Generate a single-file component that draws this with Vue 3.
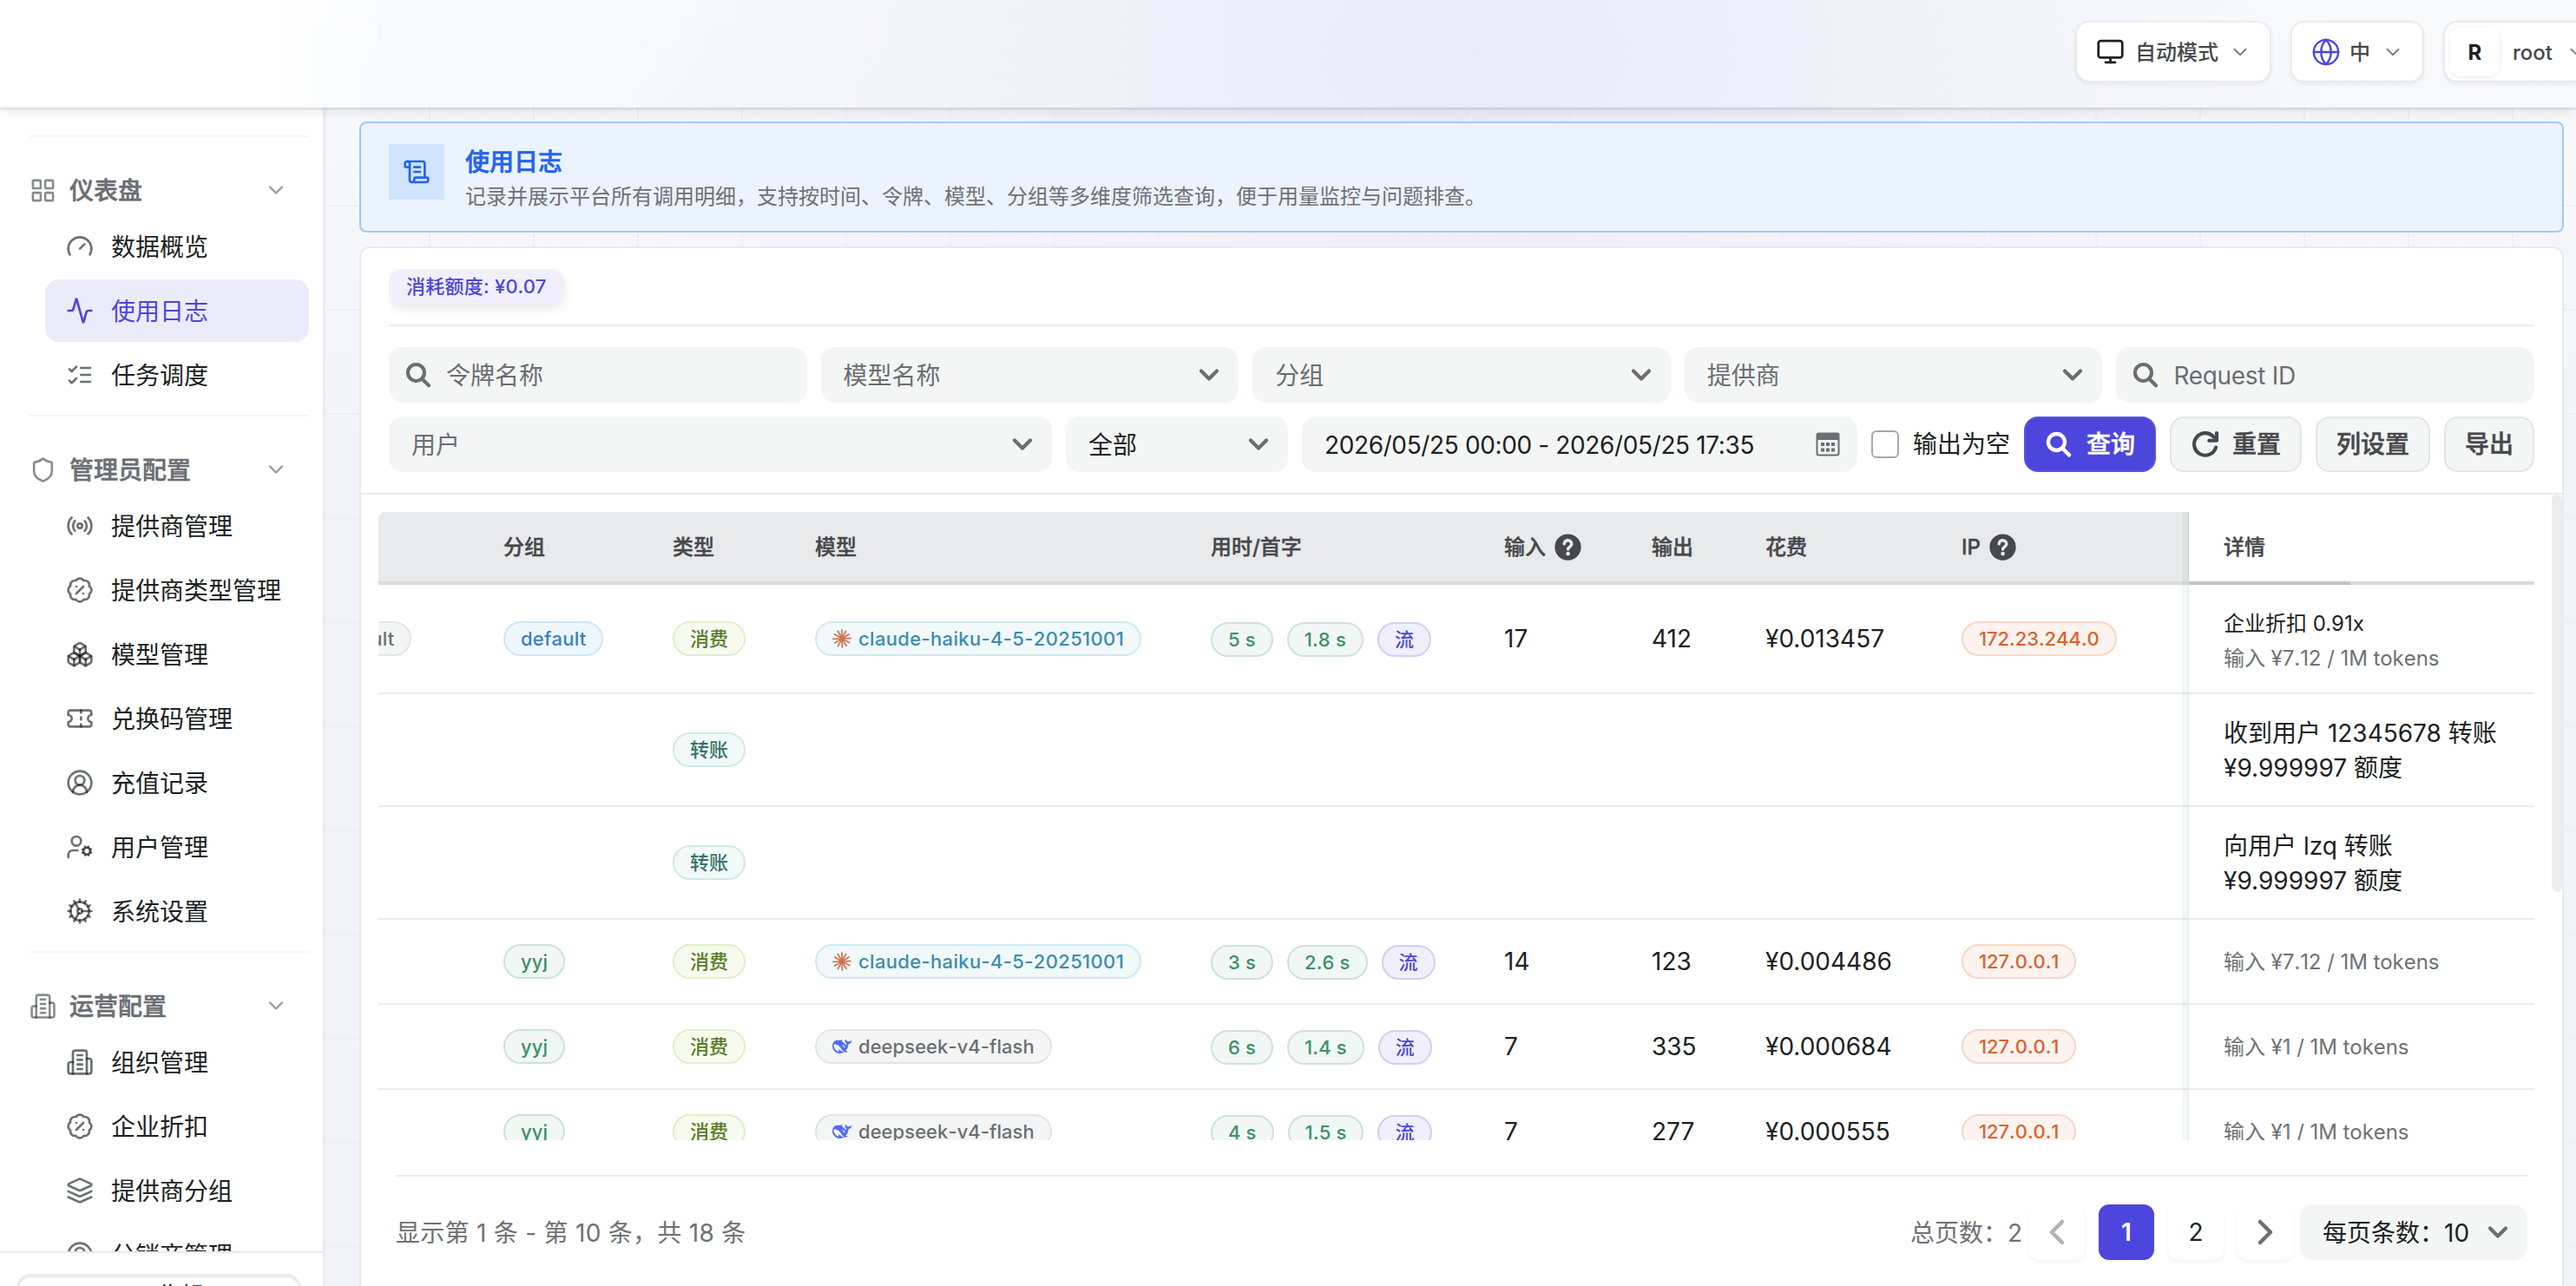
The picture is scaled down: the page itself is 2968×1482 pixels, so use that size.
<script setup>
import { h } from 'vue'

const I = {
  grid: ['M4 3h5a1 1 0 0 1 1 1v5a1 1 0 0 1-1 1H4a1 1 0 0 1-1-1V4a1 1 0 0 1 1-1Z', 'M15 3h5a1 1 0 0 1 1 1v5a1 1 0 0 1-1 1h-5a1 1 0 0 1-1-1V4a1 1 0 0 1 1-1Z', 'M15 14h5a1 1 0 0 1 1 1v5a1 1 0 0 1-1 1h-5a1 1 0 0 1-1-1v-5a1 1 0 0 1 1-1Z', 'M4 14h5a1 1 0 0 1 1 1v5a1 1 0 0 1-1 1H4a1 1 0 0 1-1-1v-5a1 1 0 0 1 1-1Z'],
  gauge: ['m12 14 4-4', 'M3.34 19a10 10 0 1 1 17.32 0'],
  activity: ['M22 12h-2.48a2 2 0 0 0-1.93 1.46l-2.35 8.36a.25.25 0 0 1-.48 0L9.24 2.18a.25.25 0 0 0-.48 0l-2.35 8.36A2 2 0 0 1 4.49 12H2'],
  checks: ['m3 17 2 2 4-4', 'm3 7 2 2 4-4', 'M13 6h8', 'M13 12h8', 'M13 18h8'],
  shield: ['M20 13c0 5-3.5 7.5-7.66 8.95a1 1 0 0 1-.67-.01C7.5 20.5 4 18 4 13V6a1 1 0 0 1 1-1c2 0 4.5-1.2 6.24-2.72a1.17 1.17 0 0 1 1.52 0C14.51 3.81 17 5 19 5a1 1 0 0 1 1 1z'],
  radio: ['M4.9 19.1C1 15.2 1 8.8 4.9 4.9', 'M7.8 16.2c-2.3-2.3-2.3-6.1 0-8.5', 'M10 12a2 2 0 1 0 4 0a2 2 0 1 0-4 0', 'M16.2 7.8c2.3 2.3 2.3 6.1 0 8.5', 'M19.1 4.9C23 8.8 23 15.1 19.1 19'],
  percent: ['M3.85 8.62a4 4 0 0 1 4.78-4.77 4 4 0 0 1 6.74 0 4 4 0 0 1 4.78 4.78 4 4 0 0 1 0 6.74 4 4 0 0 1-4.77 4.78 4 4 0 0 1-6.75 0 4 4 0 0 1-4.78-4.77 4 4 0 0 1 0-6.76Z', 'm15 9-6 6', 'M9 9h.01', 'M15 15h.01'],
  boxes: ['M2.97 12.92A2 2 0 0 0 2 14.63v3.24a2 2 0 0 0 .97 1.71l3 1.8a2 2 0 0 0 2.06 0L12 19v-5.5l-5-3-4.03 2.42Z', 'm7 16.5-4.74-2.85', 'm7 16.5 5-3', 'M7 16.5v5.17', 'M12 13.5V19l3.97 2.38a2 2 0 0 0 2.06 0l3-1.8a2 2 0 0 0 .97-1.71v-3.24a2 2 0 0 0-.97-1.71L17 10.5l-5 3Z', 'm17 16.5-5-3', 'm17 16.5 4.74-2.85', 'M17 16.5v5.17', 'M7.97 4.42A2 2 0 0 0 7 6.13v4.37l5 3 5-3V6.13a2 2 0 0 0-.97-1.71l-3-1.8a2 2 0 0 0-2.06 0l-3 1.8Z', 'M12 8 7.26 5.15', 'm12 8 4.74-2.85', 'M12 13.5V8'],
  ticket: ['M2 9a3 3 0 0 1 0 6v2a2 2 0 0 0 2 2h16a2 2 0 0 0 2-2v-2a3 3 0 0 1 0-6V7a2 2 0 0 0-2-2H4a2 2 0 0 0-2 2Z', 'M13 5v2', 'M13 17v2', 'M13 11v2'],
  user: ['M18 20a6 6 0 0 0-12 0', 'M8 10a4 4 0 1 0 8 0a4 4 0 1 0-8 0', 'M2 12a10 10 0 1 0 20 0a10 10 0 1 0-20 0'],
  userCog: ['M5 7a4 4 0 1 0 8 0a4 4 0 1 0-8 0', 'M10 15H6a4 4 0 0 0-4 4v2', 'M15 15.500a3 3 0 1 0 6 0a3 3 0 1 0-6 0', 'm21.7 16.9-.9-.3', 'm15.2 14.4-.9-.3', 'm16.6 19.2.3-.9', 'm19.1 12.7.3-.9', 'm19.6 19.2-.4-1', 'm16.8 12.8-.4-1', 'm14.3 17.1 1-.4', 'm20.7 14.3 1-.4'],
  cog: ['M12 20a8 8 0 1 0 0-16 8 8 0 0 0 0 16Z', 'M12 14a2 2 0 1 0 0-4 2 2 0 0 0 0 4Z', 'M12 2v2', 'M12 22v-2', 'm17 20.66-1-1.73', 'M11 10.27 7 3.34', 'm20.66 17-1.73-1', 'm3.34 7 1.73 1', 'M14 12h8', 'M2 12h2', 'm20.66 7-1.73 1', 'm3.34 17 1.73-1', 'm17 3.34-1 1.73', 'm11 13.73-4 6.93'],
  building: ['M6 22V4a2 2 0 0 1 2-2h8a2 2 0 0 1 2 2v18Z', 'M6 12H4a2 2 0 0 0-2 2v6a2 2 0 0 0 2 2h2', 'M18 9h2a2 2 0 0 1 2 2v9a2 2 0 0 1-2 2h-2', 'M10 6h4', 'M10 10h4', 'M10 14h4', 'M10 18h4'],
  layers: ['M12.83 2.18a2 2 0 0 0-1.66 0L2.6 6.08a1 1 0 0 0 0 1.83l8.58 3.91a2 2 0 0 0 1.66 0l8.58-3.9a1 1 0 0 0 0-1.83Z', 'm22 17.65-9.17 4.16a2 2 0 0 1-1.66 0L2 17.65', 'm22 12.65-9.17 4.16a2 2 0 0 1-1.66 0L2 12.65'],
  scroll: ['M15 12h-5', 'M15 8h-5', 'M19 17V5a2 2 0 0 0-2-2H4', 'M8 21h12a2 2 0 0 0 2-2v-1a1 1 0 0 0-1-1H11a1 1 0 0 0-1 1v1a2 2 0 1 1-4 0V5a2 2 0 1 0-4 0v2a1 1 0 0 0 1 1h3'],
  monitor: ['M4 3h16a2 2 0 0 1 2 2v10a2 2 0 0 1-2 2H4a2 2 0 0 1-2-2V5a2 2 0 0 1 2-2Z', 'M8 21h8', 'M12 17v4'],
  globe: ['M2 12a10 10 0 1 0 20 0a10 10 0 1 0-20 0', 'M12 2c-5.4 5.6-5.4 14.400 0 20c5.400-5.600 5.400-14.400 0-20', 'M2 12h20'],
  down: ['m6 9 6 6 6-6'],
  left: ['m16 4-8 8 8 8'],
  right: ['m8 4 8 8-8 8'],
  search: ['M3.500 10.200a6.700 6.700 0 1 0 13.400 0a6.700 6.700 0 1 0-13.400 0', 'm15.200 15.400 5.300 5.300'],
  refresh: ['M20.500 14.500a9 9 0 1 1-1.700-8.300', 'M21.200 2.800v6.200h-6.200'],
}

const Ico = (p) =>
  h('svg', { class: 'ico', viewBox: '0 0 24 24', width: p.size, height: p.size, fill: 'none', stroke: p.color || 'currentColor', 'stroke-width': p.w || 2, 'stroke-linecap': 'round', 'stroke-linejoin': 'round', style: 'display:block;flex:none' },
    I[p.name].map((d) => h('path', { d })))
Ico.props = ['name', 'size', 'color', 'w']

const Help = () =>
  h('svg', { viewBox: '0 0 24 24', width: 33, height: 33, style: 'display:block;flex:none;margin-left:9px' }, [
    h('circle', { cx: 12, cy: 12, r: 11, fill: '#46484c' }),
    h('path', { d: 'M8.900 9.300a3.100 3.100 0 0 1 6.200.2c0 2.100-3 2.400-3 4.300', fill: 'none', stroke: '#e9eaec', 'stroke-width': 2.600, 'stroke-linecap': 'round' }),
    h('circle', { cx: 12.1, cy: 17.500, r: 1.700, fill: '#e9eaec' }),
  ])

const groups = [
  { icon: 'grid', name: '仪表盘', items: [['gauge', '数据概览'], ['activity', '使用日志', true], ['checks', '任务调度']] },
  { icon: 'shield', name: '管理员配置', items: [['radio', '提供商管理'], ['percent', '提供商类型管理'], ['boxes', '模型管理'], ['ticket', '兑换码管理'], ['user', '充值记录'], ['userCog', '用户管理'], ['cog', '系统设置']] },
  { icon: 'building', name: '运营配置', items: [['building', '组织管理'], ['percent', '企业折扣'], ['layers', '提供商分组'], ['user', '分销商管理']] },
]

const rays = [[12, 1], [17, 2.500], [20.800, 6.500], [23, 11.500], [21.500, 17], [17.500, 21], [12.500, 23], [7, 21.500], [3, 17.500], [1, 12.500], [3, 6.500], [7, 2.500]]

const whale = 'M23.748 4.482c-.254-.124-.364.113-.512.234-.051.039-.094.09-.137.136-.372.397-.806.657-1.373.626-.829-.046-1.537.214-2.163.848-.133-.782-.575-1.248-1.247-1.548-.352-.156-.708-.311-.955-.65-.172-.241-.219-.51-.305-.774-.055-.16-.11-.323-.293-.35-.2-.031-.278.136-.356.276-.313.572-.434 1.202-.422 1.84.027 1.436.633 2.58 1.838 3.393.137.093.172.187.129.323-.082.28-.18.552-.266.833-.055.179-.137.217-.329.14a5.526 5.526 0 01-1.736-1.18c-.857-.828-1.631-1.742-2.597-2.458a11.365 11.365 0 00-.689-.471c-.985-.957.13-1.743.388-1.836.27-.098.093-.432-.779-.428-.872.004-1.67.295-2.687.684a3.055 3.055 0 01-.465.137 9.597 9.597 0 00-2.883-.102c-1.885.21-3.39 1.102-4.497 2.623C.082 8.606-.231 10.684.152 12.85c.403 2.284 1.569 4.175 3.36 5.653 1.858 1.533 3.997 2.284 6.438 2.14 1.482-.085 3.133-.284 4.994-1.86.47.234.962.327 1.78.397.63.059 1.236-.03 1.705-.128.735-.156.684-.837.419-.961-2.155-1.004-1.682-.595-2.113-.926 1.096-1.296 2.746-2.642 3.392-7.003.05-.347.007-.565 0-.845-.004-.17.035-.237.23-.256a4.173 4.173 0 001.545-.475c1.396-.763 1.96-2.015 2.093-3.517.02-.23-.004-.467-.247-.588zM11.581 18c-2.089-1.642-3.102-2.183-3.52-2.16-.392.024-.321.471-.235.763.09.288.207.486.371.739.114.167.192.416-.113.603-.673.416-1.842-.14-1.897-.167-1.361-.802-2.5-1.86-3.301-3.307-.774-1.393-1.224-2.887-1.298-4.482-.02-.386.093-.522.477-.592a4.696 4.696 0 011.529-.039c2.132.312 3.946 1.265 5.468 2.774.868.86 1.525 1.887 2.202 2.891.72 1.066 1.494 2.082 2.48 2.914.348.292.625.514.891.677-.802.09-2.14.11-3.054-.614zm1-6.44a.306.306 0 01.415-.287.302.302 0 01.2.288.306.306 0 01-.31.307.303.303 0 01-.304-.308zm3.11 1.596c-.2.081-.399.151-.59.16a1.245 1.245 0 01-.798-.254c-.274-.23-.47-.358-.552-.758a1.73 1.73 0 01.016-.588c.07-.327-.008-.537-.239-.727-.187-.156-.426-.199-.688-.199a.559.559 0 01-.254-.078c-.11-.054-.2-.19-.114-.358.028-.054.16-.186.192-.21.356-.202.767-.136 1.146.016.352.144.618.408 1.001.782.391.451.462.576.685.914.176.265.336.537.445.848.067.195-.019.354-.25.452z'

const use = (group, groupColor, model, sec, first, input, output, cost, ip, price) =>
  ({ group, groupColor, type: '消费', typeColor: 'lime', model, times: [sec, first], input, output, cost, ip, price })
const rows = [
  { ...use('default', 'blue', 'claude-haiku-4-5-20251001', '5 s', '1.8 s', 17, 412, '¥0.013457', '172.23.244.0', '输入 ¥7.12 / 1M tokens'), token: 'default', discount: '企业折扣 0.91x', size: 'first' },
  { type: '转账', typeColor: 'teal', note: ['收到用户 12345678 转账', '¥9.999997 额度'], size: 'tall' },
  { type: '转账', typeColor: 'teal', note: ['向用户 lzq 转账', '¥9.999997 额度'], size: 'tall' },
  use('yyj', 'green', 'claude-haiku-4-5-20251001', '3 s', '2.6 s', 14, 123, '¥0.004486', '127.0.0.1', '输入 ¥7.12 / 1M tokens'),
  use('yyj', 'green', 'deepseek-v4-flash', '6 s', '1.4 s', 7, 335, '¥0.000684', '127.0.0.1', '输入 ¥1 / 1M tokens'),
  use('yyj', 'green', 'deepseek-v4-flash', '4 s', '1.5 s', 7, 277, '¥0.000555', '127.0.0.1', '输入 ¥1 / 1M tokens'),
]
</script>

<template>
  <div class="page">
    <header class="top">
      <div class="actions">
        <button class="pill mode"><Ico name="monitor" size="33" color="#1c1f23" /><span>自动模式</span><Ico name="down" size="26" color="#77797d" w="1.700" /></button>
        <button class="pill lang"><Ico name="globe" size="34" color="#4d46dc" w="1.700" /><span>中</span><Ico name="down" size="26" color="#77797d" w="1.700" /></button>
        <button class="pill root"><b>R</b><span>root</span><Ico name="down" size="26" color="#77797d" w="1.700" /></button>
      </div>
    </header>

    <div class="body">
      <aside class="side">
        <nav>
          <section v-for="g in groups" :key="g.name">
            <div class="ghead"><Ico :name="g.icon" size="31" /><span>{{ g.name }}</span><Ico name="down" size="28" color="#999b9e" /></div>
            <a v-for="it in g.items" :key="it[1]" :class="{ on: it[2] }"><Ico :name="it[0]" size="32" /><span>{{ it[1] }}</span></a>
          </section>
        </nav>
        <div class="fold"><button><Ico name="left" size="24" />收起</button></div>
      </aside>

      <main>
        <div class="banner">
          <div class="bicon"><Ico name="scroll" size="32" color="#2563f0" /></div>
          <div>
            <h1>使用日志</h1>
            <p>记录并展示平台所有调用明细，支持按时间、令牌、模型、分组等多维度筛选查询，便于用量监控与问题排查。</p>
          </div>
        </div>

        <div class="card">
          <div class="filters">
            <div class="stat"><span>消耗额度: ¥0.07</span></div>
            <div class="line five">
              <div class="field s"><Ico name="search" size="34" w="2.900" /><span>令牌名称</span></div>
              <div class="field"><span>模型名称</span><Ico name="down" size="36" w="2.800" /></div>
              <div class="field"><span>分组</span><Ico name="down" size="36" w="2.800" /></div>
              <div class="field"><span>提供商</span><Ico name="down" size="36" w="2.800" /></div>
              <div class="field s"><Ico name="search" size="34" w="2.900" /><span class="req">Request ID</span></div>
            </div>
            <div class="line">
              <div class="field fuser"><span>用户</span><Ico name="down" size="36" w="2.800" /></div>
              <div class="field fall"><span class="dark">全部</span><Ico name="down" size="36" w="2.800" /></div>
              <div class="field fdate">
                <span class="dark">2026/05/25 00:00 - 2026/05/25 17:35</span>
                <svg width="28" height="28" viewBox="0 0 28 28"><rect x="1.500" y="1.500" width="25" height="25" rx="2" fill="none" stroke="#6b6e73" stroke-width="2" /><path d="M1 9V3a2 2 0 0 1 2-2h22a2 2 0 0 1 2 2v6Z" fill="#6b6e73" /><path d="M6 12h4v4H6zM12 12h4v4h-4zM18 12h4v4h-4zM6 18.500h4v4H6zM12 18.500h4v4h-4zM18 18.500h4v4h-4z" fill="#6b6e73" /></svg>
              </div>
              <label class="check"><i></i>输出为空</label>
              <button class="btn primary"><Ico name="search" size="34" w="3.100" />查询</button>
              <button class="btn reset"><Ico name="refresh" size="34" w="2.900" />重置</button>
              <button class="btn">列设置</button>
              <button class="btn">导出</button>
            </div>
          </div>

          <div class="scrollbar"></div>
          <div class="table">
            <div class="tr th">
              <div></div><div>分组</div><div>类型</div><div>模型</div><div>用时/首字</div>
              <div>输入<Help /></div><div>输出</div><div>花费</div><div>IP<Help /></div>
              <div class="detail">详情</div>
            </div>
            <div v-for="(r, i) in rows" :key="i" class="tr td" :class="r.size">
              <div class="clip"><span v-if="r.token" class="tag grey">{{ r.token }}</span></div>
              <div><span v-if="r.group" class="tag" :class="r.groupColor">{{ r.group }}</span></div>
              <div><span class="tag" :class="r.typeColor">{{ r.type }}</span></div>
              <div>
                <span v-if="r.model" class="tag model" :class="r.model[0] === 'c' ? 'cyan' : 'grey'">
                  <svg v-if="r.model[0] === 'c'" width="22" height="22" viewBox="0 0 24 24"><path v-for="(p, k) in rays" :key="k" :d="`M12 12L${p[0]} ${p[1]}`" stroke="#cf7353" stroke-width="1.900" stroke-linecap="round" /></svg>
                  <svg v-else width="22" height="22" viewBox="0 0 24 24"><path :d="whale" fill="#4d6bfe" /></svg>
                  {{ r.model }}
                </span>
              </div>
              <div class="times"><template v-if="r.times"><span v-for="t in r.times" :key="t" class="tag green">{{ t }}</span><span class="tag violet">流</span></template></div>
              <div>{{ r.input }}</div>
              <div>{{ r.output }}</div>
              <div>{{ r.cost }}</div>
              <div><span v-if="r.ip" class="tag orange">{{ r.ip }}</span></div>
              <div class="detail">
                <p v-for="n in r.note" :key="n">{{ n }}</p>
                <p v-if="r.discount" class="sm">{{ r.discount }}</p>
                <p v-if="r.price" class="sm muted">{{ r.price }}</p>
              </div>
            </div>
          </div>

          <footer>
            <span class="sum">显示第 1 条 - 第 10 条，共 18 条</span>
            <span class="pages">总页数：2</span>
            <button class="pg dim"><Ico name="left" size="36" w="3" /></button>
            <button class="pg cur">1</button>
            <button class="pg">2</button>
            <button class="pg nx"><Ico name="right" size="36" w="3" /></button>
            <div class="per"><span>每页条数：10</span><Ico name="down" size="36" w="2.800" /></div>
          </footer>
        </div>
      </main>
    </div>
  </div>
</template>

<style>
body { margin: 0; overflow: hidden; }
</style>

<style scoped>
* { box-sizing: border-box; }
.page {
  width: 2968px; height: 1482px; overflow: hidden; display: flex; flex-direction: column;
  font-family: Inter, "Noto Sans CJK SC", sans-serif; font-size: 28px; line-height: 40px; color: #1c1f23;
  background: radial-gradient(1000px 620px at 1700px 60px, #eaeaf7 0%, #f1f1fa 45%, rgba(247, 248, 252, 0) 100%), linear-gradient(#f9fafc, #f3f4f9 500px);
}
button { font: inherit; color: inherit; border: 0; padding: 0; background: none; display: flex; align-items: center; }
p, h1 { margin: 0; }

.top {
  height: 124px; flex: none; display: flex; align-items: flex-start; padding-top: 24px; z-index: 2;
  background: linear-gradient(90deg, #fff 310px, rgba(255, 255, 255, 0) 450px);
  box-shadow: 0 2px 2px rgba(20, 20, 40, .1), 0 6px 12px rgba(20, 20, 40, .07);
}
.actions { display: flex; gap: 22px; margin-left: auto; margin-right: -36px; }
.pill { height: 71px; border: 2px solid #ebebed; border-radius: 16px; background: #fff; font-size: 24px; font-weight: 500; color: #46484c; box-shadow: 0 2px 5px rgba(0, 0, 0, .06); }
.pill span { padding-top: 2px; }
.mode { width: 226px; padding-left: 22px; }
.mode span { margin: 0 12px 0 12px; }
.lang { width: 154px; padding-left: 22px; }
.lang span { margin: 0 13px 0 10px; }
.root { width: 189px; padding-left: 6px; }
.root b { width: 57px; height: 57px; line-height: 59px; border-radius: 12px; text-align: center; color: #1c1f23; font-weight: 700; box-shadow: 0 1px 5px rgba(0, 0, 0, .09); }
.root span { margin: 0 15px 0 15px; }

.body { flex: 1; min-height: 0; display: flex; }
.side { width: 374px; flex: none; background: #fff; border-right: 2px solid #ebecee; display: flex; flex-direction: column; }
nav { flex: 1; min-height: 0; overflow: hidden; padding: 32px 16px 0 34px; }
section { border-top: 2px solid #f5f5f6; padding-top: 32px; margin-bottom: 10px; }
.ghead { height: 58px; display: flex; align-items: center; font-weight: 500; -webkit-text-stroke: .5px currentColor; color: #6b6e73; padding-right: 24px; }
.ghead span { flex: 1; margin-left: 15px; padding-top: 1px; }
section a { display: flex; align-items: center; height: 72px; margin: 0 0 2px 18px; padding-left: 24px; border-radius: 16px; }
section a:last-child { margin-bottom: 0; }
section a span { margin-left: 20px; padding-top: 1px; }
section a .ico, section a > :first-child { color: rgba(28, 31, 35, .64); }
.ghead > svg:first-child { color: rgba(28, 31, 35, .52); }
section a.on { background: #ecebfa; color: #4d46dc; }
section a.on > :first-child { color: #4d46dc; }
.fold { height: 40px; border-top: 2px solid #e8e9ea; padding: 24px 24px 0 18px; overflow: hidden; flex: none; }
.fold button { width: 100%; height: 52px; border: 4px solid #ebebec; border-radius: 18px; justify-content: center; gap: 24px; font-weight: 500; color: #46484c; }

main {
  flex: 1; padding: 16px 14px 0 40px; min-width: 0;
  background-image: linear-gradient(90deg, #eeeff9 2px, transparent 2px), linear-gradient(#eeeff9 2px, transparent 2px);
  background-size: 120px 120px; background-position: 0 0, 0 -8px;
}
.banner { height: 128px; border: 2px solid #a0cbfa; border-radius: 8px; background: #ebf3fe; display: flex; padding: 24px 32px; gap: 24px; }
.bicon { width: 64px; height: 64px; background: #d0e4fd; display: flex; align-items: center; justify-content: center; }
h1 { font-size: 28px; line-height: 42px; font-weight: 500; -webkit-text-stroke: .6px currentColor; color: #2563f0; }
.banner p { font-size: 24px; line-height: 38px; color: #6d7177; }

.card { position: relative; margin-top: 16px; height: 1300px; background: #fff; border: 2px solid #e9eaed; border-radius: 12px; }
.filters { height: 284px; border-bottom: 2px solid #ebecec; padding: 24px 32px 0; }
.stat { height: 66px; border-bottom: 2px solid #ebecec; overflow: hidden; margin-bottom: 24px; }
.stat span { display: inline-block; height: 40px; line-height: 40px; padding: 0 20px; letter-spacing: .25px; border-radius: 16px; background: #f0effb; color: #4d46dc; font-size: 22px; font-weight: 500; box-shadow: 0 6px 14px rgba(0, 0, 0, .09); vertical-align: top; }
.line { display: flex; gap: 16px; margin-bottom: 16px; }
.line.five { display: grid; grid-template-columns: repeat(5, minmax(0, 1fr)); }
.field { flex: 1; height: 64px; border-radius: 16px; background: #f4f6f5; display: flex; align-items: center; justify-content: space-between; padding: 0 16px 0 26px; color: #6b6e73; }
.field > span, .per > span { padding-top: 1px; }
.field.s { justify-content: flex-start; padding-left: 17px; }
.field.s span { margin-left: 15px; }
.field .req { letter-spacing: -.3px; }
.dark { color: #1c1f23; }
.fuser { flex: 1; }
.fall { flex: none; width: 256px; }
.fdate { flex: none; width: 640px; padding-right: 20px; letter-spacing: -.37px; }
.check { display: flex; align-items: center; gap: 16px; white-space: nowrap; }
.check i { width: 32px; height: 32px; border: 2px solid #a6a8aa; border-radius: 6px; background: #fff; }
.btn { height: 64px; border: 2px solid #e4e6e5; border-radius: 16px; background: #f4f6f5; padding: 0 22px; font-weight: 500; -webkit-text-stroke: .5px currentColor; color: #46484c; }
.primary { background: #4d46dc; border-color: #5a54df; color: #fff; gap: 15px; width: 152px; padding-left: 21px; }
.reset { width: 152px; gap: 14px; }

.scrollbar { position: absolute; right: 0; top: 284px; width: 12px; height: 458px; border-radius: 6px; background: #ecedef; }
.table { margin: 20px 32px 0 20px; height: 724px; overflow: hidden; border-top-left-radius: 8px; }
.tr { display: grid; grid-template-columns: 144px 195px 164px 456px 338px 170px 131px 226px 261px 399px; border-bottom: 2px solid #ebecec; }
.tr > div { display: flex; align-items: center; white-space: nowrap; }
.th { height: 84px; border-bottom: 4px solid #dadbdd; background: #e9eaec; font-size: 24px; font-weight: 500; -webkit-text-stroke: .4px currentColor; color: #46484c; }
.th > div { padding-top: 1px; }
.tr .detail { position: relative; background: #fff; padding-left: 40px; border-left: 1px solid #e9eaeb; }
.detail::before { content: ""; position: absolute; left: -8px; top: 0; bottom: -2px; width: 7px; background: rgba(30, 35, 50, .045); }
.th .detail::before { bottom: -4px; }
.th .detail { border-left-color: #c9cacd; }
.th .detail::after { content: ""; position: absolute; left: 0; bottom: -4px; width: 186px; height: 4px; background: #c1c3c5; }
.td { height: 98px; }
.td.first { height: 126px; }
.td.tall { height: 130px; }
.td .detail { flex-direction: column; align-items: flex-start; justify-content: center; }
.td.first .detail { padding-top: 5px; }
.td.tall .detail { padding-top: 1px; }
.sm { font-size: 24px; padding-top: 1px; }
.muted { color: #6e7175; font-kerning: none; letter-spacing: -.05px; }
.first .sm { padding-top: 0; }
.clip { overflow: hidden; }
.clip .tag { margin-left: -77px; }
.tag { display: inline-flex; align-items: center; height: 40px; padding: 0 18px; border: 2px solid; border-radius: 20px; font-size: 22px; font-weight: 500; line-height: 36px; white-space: pre; font-kerning: none; letter-spacing: .25px; }
.model svg { margin-right: 8px; flex: none; }
.model { white-space: nowrap; }
.times { gap: 16px; padding-top: 2px; }
.grey { background: #f4f6f5; border-color: #e3e5e5; color: #6b6e73; }
.model.grey { letter-spacing: .05px; }
.model.cyan { letter-spacing: .34px; }
.blue { background: #eff7fe; border-color: #cfe5f8; color: #3b7fc4; }
.lime { background: #f7fbef; border-color: #e0efc9; color: #587b28; letter-spacing: 0; }
.cyan { background: #f1f9fb; border-color: #cfeaf3; color: #3c8cb0; }
.green { background: #f1f7f5; border-color: #cce3da; color: #3e9068; letter-spacing: .15px; }
.teal { background: #f2f9f8; border-color: #cfeae6; color: #35736c; letter-spacing: 0; }
.violet { background: #f0effb; border-color: #d1cff5; color: #4d46dc; letter-spacing: 0; }
.orange { background: #fcf3ef; border-color: #f7d6c6; color: #da622f; letter-spacing: -.05px; }

footer { margin: 40px 40px 0; border-top: 2px solid #ebecec; padding-top: 32px; display: flex; align-items: center; }
.sum { flex: 1; color: #6e7175; letter-spacing: .28px; padding-top: 1px; }
.pages { color: #6e7175; margin-right: 8px; padding-top: 1px; }
.pg { width: 64px; height: 64px; border-radius: 12px; justify-content: center; margin-right: 16px; background: #fff; box-shadow: 0 2px 5px rgba(0, 0, 0, .06); }
.pg.cur { background: #4d46dc; color: #fff; font-weight: 600; box-shadow: none; }
.pg.dim { color: #b0b2b4; }
.pg.nx { margin-right: 8px; color: #6b6e73; }
.per { width: 262px; height: 64px; border-radius: 16px; background: #f4f6f5; display: flex; align-items: center; justify-content: space-between; padding: 0 16px 0 26px; }
.per svg { color: #6b6e73; }
</style>
